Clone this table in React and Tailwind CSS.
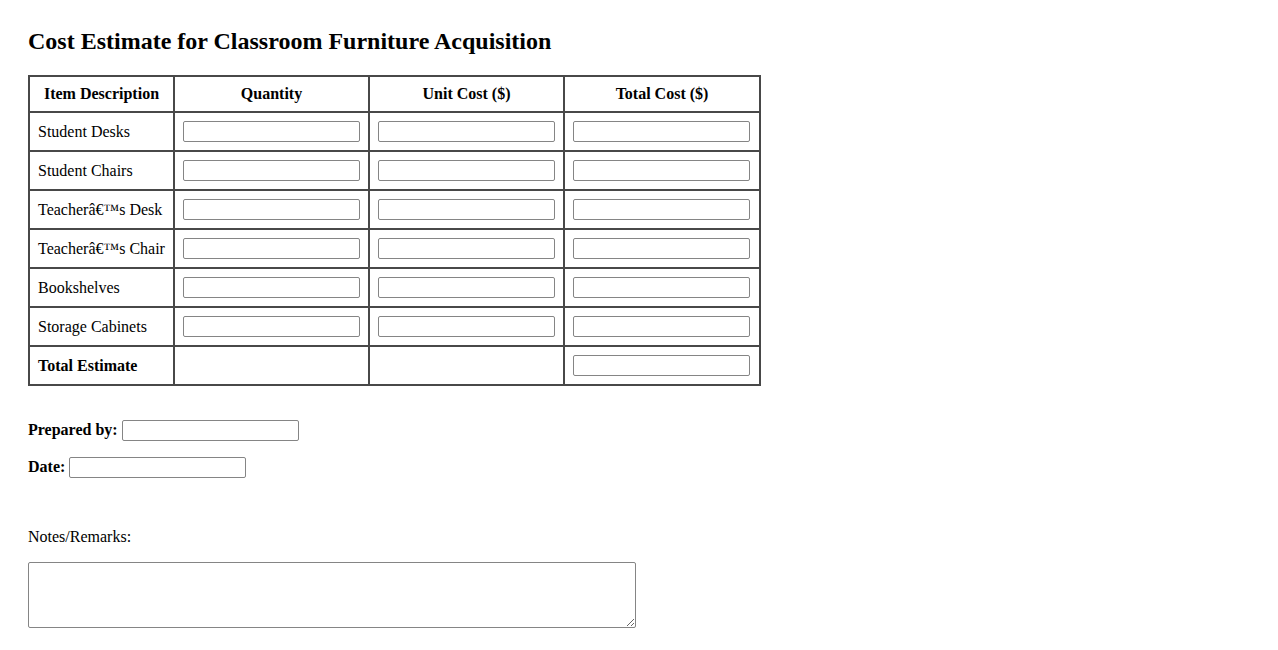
// Cost estimate form — classroom furniture
const ITEMS = [
  'Student Desks',
  'Student Chairs',
  'Teacherâ€™s Desk',
  'Teacherâ€™s Chair',
  'Bookshelves',
  'Storage Cabinets',
];

const cellCls = 'border-2 border-[#484848] px-[8px] py-[8px] align-middle whitespace-nowrap';
const inputCls = 'block w-[177px] h-[21px] border border-[#858585] rounded-[2px] bg-white px-[2px] text-[13px]';

function Field() {
  return <input type="text" className={inputCls} />;
}

export default function App() {
  return (
    <div
      className="min-h-screen bg-white text-black px-[28px] pb-10"
      style={{ fontFamily: '"Liberation Serif", "Times New Roman", serif' }}
    >
      <h2 className="pt-[27px] mb-[20px] text-[24px] leading-[28px] font-bold">
        Cost Estimate for Classroom Furniture Acquisition
      </h2>

      <table className="border-collapse text-[16px] leading-[19px]">
        <thead>
          <tr className="leading-[18px]">
            <th className={`${cellCls} text-center w-[145px]`}>Item Description</th>
            <th className={`${cellCls} text-center`}>Quantity</th>
            <th className={`${cellCls} text-center`}>Unit Cost ($)</th>
            <th className={`${cellCls} text-center w-[196px]`}>Total Cost ($)</th>
          </tr>
        </thead>
        <tbody>
          {ITEMS.map(name => (
            <tr key={name}>
              <td className={`${cellCls} text-left`}>{name}</td>
              <td className={cellCls}><Field /></td>
              <td className={cellCls}><Field /></td>
              <td className={cellCls}><Field /></td>
            </tr>
          ))}
          <tr>
            <td className={`${cellCls} text-left font-bold`}>Total Estimate</td>
            <td className={cellCls}></td>
            <td className={cellCls}></td>
            <td className={cellCls}><Field /></td>
          </tr>
        </tbody>
      </table>

      <div className="mt-[32px] flex items-center gap-[4px] text-[16px] font-bold">
        <label>Prepared by:</label>
        <Field />
      </div>
      <div className="mt-[13px] flex items-center gap-[4px] text-[16px] font-bold">
        <label>Date:</label>
        <Field />
      </div>

      <p className="mt-[49px] text-[16px] leading-[18px]">Notes/Remarks:</p>
      <textarea className="block mt-[16px] w-[608px] h-[66px] border border-[#858585] rounded-[2px]" />
    </div>
  );
}
